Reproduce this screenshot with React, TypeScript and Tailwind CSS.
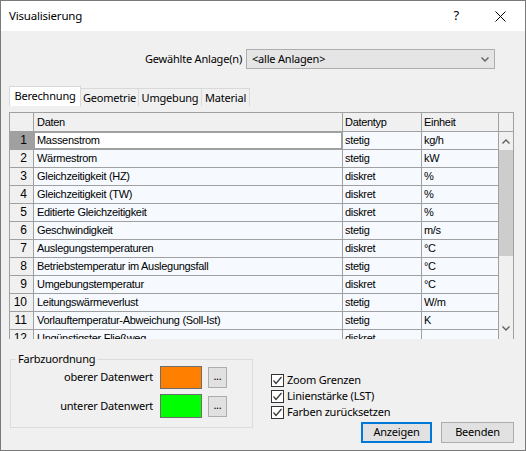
import React from "react";

const rows: [string, string, string][] = [
  ["Massenstrom", "stetig", "kg/h"],
  ["Wärmestrom", "stetig", "kW"],
  ["Gleichzeitigkeit (HZ)", "diskret", "%"],
  ["Gleichzeitigkeit (TW)", "diskret", "%"],
  ["Editierte Gleichzeitigkeit", "diskret", "%"],
  ["Geschwindigkeit", "stetig", "m/s"],
  ["Auslegungstemperaturen", "diskret", "°C"],
  ["Betriebstemperatur im Auslegungsfall", "stetig", "°C"],
  ["Umgebungstemperatur", "diskret", "°C"],
  ["Leitungswärmeverlust", "stetig", "W/m"],
  ["Vorlauftemperatur-Abweichung (Soll-Ist)", "stetig", "K"],
  ["Ungünstigster Fließweg", "diskret", ""],
];

const tabs = ["Berechnung", "Geometrie", "Umgebung", "Material"];

const Check = ({ label }: { label: string }) => (
  <div className="flex items-center h-[16px]">
    <div className="w-[13px] h-[13px] border border-[#333333] bg-white flex items-center justify-center">
      <svg width="11" height="11" viewBox="0 0 11 11">
        <path d="M1.5 5.5 L4 8.5 L9.5 2" fill="none" stroke="#333333" strokeWidth="1.2" />
      </svg>
    </div>
    <span className="ml-[3px] leading-[16px] whitespace-nowrap">{label}</span>
  </div>
);

const Chevron = ({ up }: { up?: boolean }) => (
  <svg width="8" height="5" viewBox="0 0 8 5">
    <path
      d={up ? "M0.5 4.5 L4 1 L7.5 4.5" : "M0.5 0.5 L4 4 L7.5 0.5"}
      fill="none"
      stroke="#606060"
      strokeWidth="1.4"
    />
  </svg>
);

export default function App() {
  return (
    <div className="w-[526px] h-[451px] flex flex-col border border-[#7a7a7a] bg-[#f0f0f0] text-[11px] tracking-[-0.2px] text-black overflow-hidden font-['Segoe_UI','Noto_Sans',sans-serif]">
      {/* Title bar */}
      <div className="h-[30px] bg-white flex items-center pl-[8px] shrink-0">
        <span className="flex-1 text-[11.5px]">Visualisierung</span>
        <span className="text-[13px] mr-[36px]">?</span>
        <svg width="11" height="11" viewBox="0 0 11 11" className="mr-[19px]">
          <path d="M0.5 0.5 L10.5 10.5 M10.5 0.5 L0.5 10.5" stroke="#000" strokeWidth="1" />
        </svg>
      </div>

      {/* Anlage selection */}
      <div className="mt-[18px] h-[20px] flex items-center justify-end gap-[4px] pr-[30px]">
        <span className="whitespace-nowrap">Gewählte Anlage(n)</span>
        <div className="w-[249px] h-[20px] border border-[#adadad] bg-[#e5e5e5] flex items-center pl-[5px] pr-[5px]">
          <span className="flex-1">&lt;alle Anlagen&gt;</span>
          <Chevron />
        </div>
      </div>

      {/* Tabs */}
      <div className="mt-[17px] h-[20px] flex items-end pl-[8px]">
        {tabs.map((t, i) =>
          i === 0 ? (
            <div key={t} className="w-[72px] h-[20px] bg-white border border-b-0 border-[#d9d9d9] flex items-center justify-center pb-[1px] whitespace-nowrap">
              {t}
            </div>
          ) : (
            <div
              key={t}
              className={
                "h-[18px] border-t border-r border-[#d9d9d9] flex items-center justify-center pt-[2px] whitespace-nowrap " +
                (i === 1 ? "w-[58px]" : i === 2 ? "w-[63px]" : "w-[48px]")
              }
            >
              {t}
            </div>
          )
        )}
      </div>

      {/* Grid */}
      <div className="mt-[6px] ml-[8px] w-[505px] h-[227px] shrink-0 border-l border-t border-[#a0a0a0] flex overflow-hidden font-['Liberation_Sans',Arial,sans-serif] text-[11px] tracking-[-0.3px]">
        <div className="w-[489px] flex flex-col">
          <div className="flex h-[19px] shrink-0 bg-[#f0f0f0]">
            <div className="w-[24px] border-r border-b border-[#a0a0a0]" />
            <div className="w-[309px] border-r border-b border-[#a0a0a0] pl-[3px] leading-[18px]">Daten</div>
            <div className="w-[79px] border-r border-b border-[#a0a0a0] pl-[2px] leading-[18px]">Datentyp</div>
            <div className="w-[77px] border-r border-b border-[#a0a0a0] pl-[2px] leading-[18px]">Einheit</div>
          </div>
          {rows.map(([name, typ, unit], i) => (
            <div key={i} className="flex h-[18px] shrink-0">
              <div
                className={
                  "w-[24px] border-r border-b border-[#a0a0a0] text-right pr-[6px] leading-[17px] text-[12px] tracking-normal " +
                  (i === 0 ? "bg-[#a0a0a0]" : "bg-[#f0f0f0]")
                }
              >
                {i + 1}
              </div>
              <div
                className={
                  "w-[309px] border-r border-b border-[#a0a0a0] pl-[3px] leading-[17px] whitespace-nowrap " +
                  (i === 0 ? "bg-white shadow-[inset_0_0_0_1px_#a0a0a0]" : "bg-[#f6faff]")
                }
              >
                {name}
              </div>
              <div className="w-[79px] border-r border-b border-[#a0a0a0] bg-[#f6faff] pl-[2px] leading-[17px]">{typ}</div>
              <div className="w-[77px] border-r border-b border-[#a0a0a0] bg-[#f6faff] pl-[2px] leading-[17px]">{unit}</div>
            </div>
          ))}
        </div>
        <div className="w-[16px] flex flex-col border-r border-[#a0a0a0]">
          <div className="h-[19px] shrink-0 border-b border-[#a0a0a0] bg-[#f0f0f0]" />
          <div className="flex-1 flex flex-col bg-[#f0f0f0]">
            <div className="h-[18px] flex items-center justify-center">
              <Chevron up />
            </div>
            <div className="h-[106px] bg-[#cdcdcd]" />
            <div className="flex-1" />
            <div className="h-[14px] flex items-start justify-center pt-[1px]">
              <Chevron />
            </div>
          </div>
        </div>
      </div>

      {/* Bottom section */}
      <div className="mt-[13px] flex pl-[9px]">
        <fieldset className="w-[243px] h-[76px] border border-[#dcdcdc] flex flex-col gap-[5px]">
          <legend className="ml-[5px] px-[2px] leading-[14px]">Farbzuordnung</legend>
          <div className="flex items-center h-[23px]">
            <span className="w-[142px] text-right whitespace-nowrap">oberer Datenwert</span>
            <div className="ml-[7px] w-[42px] h-[23px] border border-[#6d6d6d] bg-[#ff8000]" />
            <div className="ml-[6px] w-[19px] h-[21px] border border-[#adadad] bg-[#e1e1e1] flex items-center justify-center leading-none pb-[4px]">...</div>
          </div>
          <div className="flex items-center h-[24px]">
            <span className="w-[142px] text-right whitespace-nowrap">unterer Datenwert</span>
            <div className="ml-[7px] w-[42px] h-[24px] border border-[#6d6d6d] bg-[#00ff00]" />
            <div className="ml-[6px] w-[19px] h-[21px] border border-[#adadad] bg-[#e1e1e1] flex items-center justify-center leading-none pb-[4px]">...</div>
          </div>
        </fieldset>

        <div className="ml-[18px] flex-1 flex flex-col pt-[20px]">
          <Check label="Zoom Grenzen" />
          <Check label="Linienstärke (LST)" />
          <Check label="Farben zurücksetzen" />
          <div className="mt-[2px] flex justify-end gap-[9px] pr-[11px]">
            <div className="w-[71px] h-[21px] border-2 border-[#0078d7] bg-[#e1e1e1] flex items-center justify-center">Anzeigen</div>
            <div className="w-[73px] h-[21px] border border-[#adadad] bg-[#e1e1e1] flex items-center justify-center">Beenden</div>
          </div>
        </div>
      </div>
    </div>
  );
}
